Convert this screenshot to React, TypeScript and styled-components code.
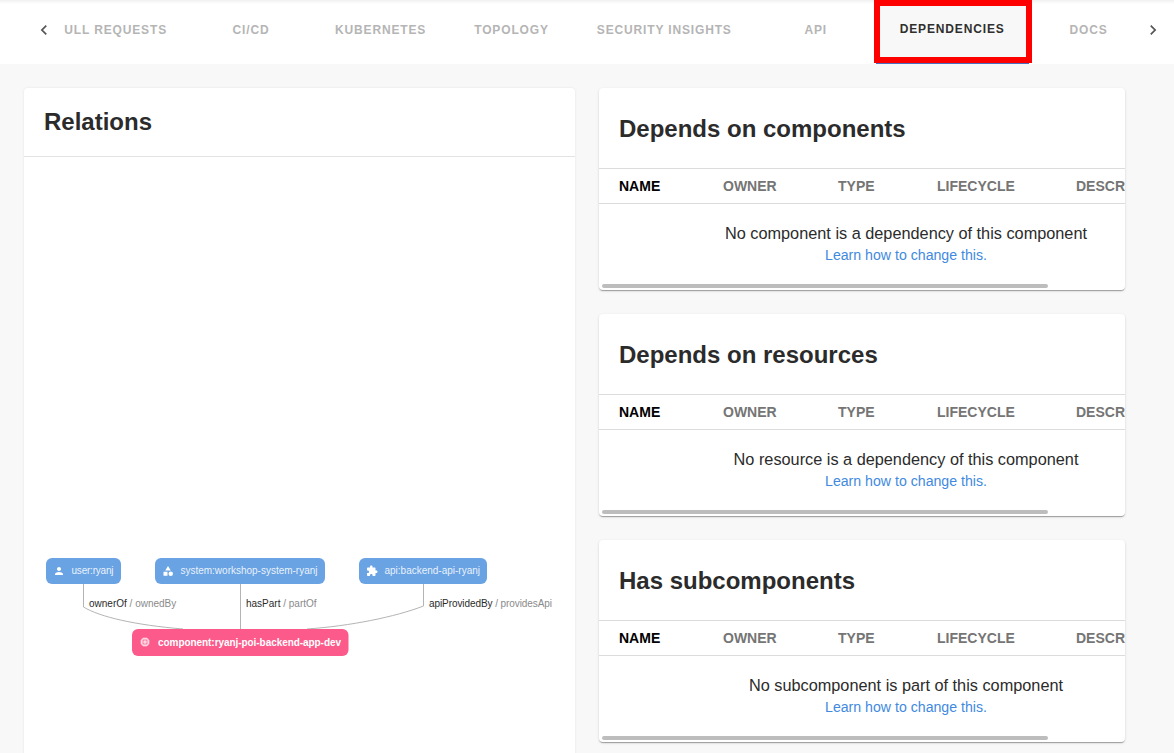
import React from "react";
import styled, { createGlobalStyle } from "styled-components";

const Global = createGlobalStyle`
  html, body { margin: 0; padding: 0; height: 753px; overflow: hidden; background: #f8f8f8; }
  body { font-family: "Liberation Sans", Arial, sans-serif; color: #2b2b2b; }
  * { box-sizing: border-box; }
`;

const Page = styled.div`
  width: 1174px;
  height: 753px;
  overflow: hidden;
  background: #f8f8f8;
`;

const TabBar = styled.nav`
  position: relative;
  display: flex;
  align-items: stretch;
  height: 64px;
  padding-left: 24px;
  background: #fff;
  &::before {
    content: "";
    position: absolute;
    left: 0;
    right: 0;
    top: 0;
    height: 4px;
    background: linear-gradient(rgba(0, 0, 0, 0.06), rgba(0, 0, 0, 0));
    pointer-events: none;
  }
`;

const ScrollButton = styled.button`
  flex: 0 0 40px;
  display: flex;
  align-items: center;
  justify-content: center;
  padding: 0 0 4px;
  border: 0;
  background: transparent;
  color: #555;
`;

const TabScroller = styled.div`
  flex: 0 0 1069px;
  overflow: hidden;
`;

const TabRow = styled.div`
  display: flex;
  height: 64px;
  margin-left: -32.5px;
  width: max-content;
`;

const Tab = styled.div<{ $selected?: boolean }>`
  position: relative;
  flex: none;
  min-width: 120px;
  height: 64px;
  padding: 0 24px 5px;
  display: flex;
  align-items: center;
  justify-content: center;
  font-size: 12px;
  font-weight: 700;
  letter-spacing: 0.85px;
  text-transform: uppercase;
  white-space: nowrap;
  color: ${(p) => (p.$selected ? "#2f2f2f" : "#b5b5b5")};
  background: ${(p) => (p.$selected ? "#f8f8f8" : "transparent")};
  ${(p) => (p.$selected ? "border-bottom: 1px solid #4a6fc0;" : "")}
`;

const RedMark = styled.span`
  position: absolute;
  left: -2px;
  right: -3px;
  top: 0;
  bottom: 0;
  border: 6px solid #ff0000;
  pointer-events: none;
`;

const Content = styled.main`
  display: grid;
  grid-template-columns: 551px 526px;
  column-gap: 24px;
  padding: 24px;
  align-items: start;
`;

const Card = styled.section`
  background: #fff;
  border-radius: 4px;
  box-shadow: 0 2px 1px -1px rgba(0, 0, 0, 0.2), 0 1px 1px 0 rgba(0, 0, 0, 0.14), 0 1px 3px 0 rgba(0, 0, 0, 0.12);
  overflow: hidden;
`;

const RelationsCard = styled(Card)`
  height: 700px;
  box-shadow: 0 0 3px rgba(0, 0, 0, 0.08);
`;

const RelationsHeader = styled.header`
  height: 69px;
  padding: 0 20px 1px;
  display: flex;
  align-items: center;
  border-bottom: 1px solid #e3e3e3;
`;

const CardTitle = styled.h2`
  margin: 0;
  font-size: 24px;
  font-weight: 700;
  line-height: 32px;
  color: #2b2b2b;
`;

const GraphArea = styled.div`
  height: 631px;
`;

const Graph = styled.svg`
  display: block;
  width: 551px;
  height: 631px;
`;

const NodeLabel = styled.text`
  font-family: "Liberation Sans", Arial, sans-serif;
  font-size: 10px;
  fill: #fff;
  fill-opacity: 0.88;
`;

const MainNodeLabel = styled(NodeLabel)`
  font-weight: 700;
  fill-opacity: 1;
`;

const EdgeLabel = styled.text`
  font-family: "Liberation Sans", Arial, sans-serif;
  font-size: 10px;
  fill: #8a8a8a;
`;

const EdgeStrong = styled.tspan`
  fill: #2b2b2b;
`;

const Column = styled.div`
  display: flex;
  flex-direction: column;
  gap: 24px;
`;

const DependencyCard = styled(Card)`
  height: 202px;
  display: flex;
  flex-direction: column;
`;

const DependencyHeader = styled.header`
  height: 81px;
  flex: none;
  padding: 1px 20px 0;
  display: flex;
  align-items: center;
  border-bottom: 1px solid #dcdcdc;
`;

const TableClip = styled.div`
  overflow: hidden;
  flex: 1;
`;

const Table = styled.div`
  width: 614px;
`;

const HeadRow = styled.div`
  display: grid;
  grid-template-columns: 104px 115px 99px 139px 1fr;
  height: 35px;
  align-items: center;
  padding-left: 20px;
  border-bottom: 1px solid #dcdcdc;
`;

const HeadCell = styled.div<{ $active?: boolean }>`
  font-size: 14px;
  font-weight: 700;
  white-space: nowrap;
  color: ${(p) => (p.$active ? "#000" : "#757575")};
`;

const EmptyRow = styled.div`
  padding-top: 18px;
  text-align: center;
`;

const EmptyText = styled.div`
  font-size: 16.3px;
  line-height: 22px;
  color: #2b2b2b;
`;

const HelpLink = styled.a`
  display: block;
  font-size: 14.15px;
  line-height: 22px;
  color: #3f8ae0;
  text-decoration: none;
`;

const ScrollThumb = styled.div`
  flex: none;
  width: 446px;
  height: 4px;
  margin: 0 0 2px 3px;
  border-radius: 2px;
  background: #bdbdbd;
`;

const Chevron = ({ d }: { d: string }) => (
  <svg width="20" height="20" viewBox="0 0 24 24" fill="currentColor">
    <path d={d} />
  </svg>
);

const tabs = ["Pull Requests", "CI/CD", "Kubernetes", "Topology", "Security Insights", "API", "Dependencies", "Docs"];
const columns = ["Name", "Owner", "Type", "Lifecycle", "Description"];
const sections = [
  { title: "Depends on components", empty: "No component is a dependency of this component" },
  { title: "Depends on resources", empty: "No resource is a dependency of this component" },
  { title: "Has subcomponents", empty: "No subcomponent is part of this component" },
];

const ICONS = {
  user: "M12 12c2.21 0 4-1.79 4-4s-1.79-4-4-4-4 1.79-4 4 1.79 4 4 4zm0 2c-2.67 0-8 1.34-8 4v2h16v-2c0-2.66-5.33-4-8-4z",
  system: "M12 2l-5.5 9h11zM17.5 13a4.5 4.5 0 1 0 0 9 4.5 4.5 0 0 0 0-9zM3 13.5h8v8H3z",
  api: "M20.5 11H19V7c0-1.1-.9-2-2-2h-4V3.5C13 2.12 11.88 1 10.5 1S8 2.12 8 3.5V5H4c-1.1 0-1.99.9-1.99 2v3.8H3.5c1.49 0 2.7 1.21 2.7 2.7s-1.21 2.7-2.7 2.7H2V20c0 1.1.9 2 2 2h3.8v-1.5c0-1.49 1.21-2.7 2.7-2.7 1.49 0 2.7 1.21 2.7 2.7V22H17c1.1 0 2-.9 2-2v-4h1.5c1.38 0 2.5-1.12 2.5-2.5S21.88 11 20.5 11z",
  component: "M15 9H9v6h6V9zm-2 4h-2v-2h2v2zm8-2V9h-2V7c0-1.1-.9-2-2-2h-2V3h-2v2h-2V3H9v2H7c-1.1 0-2 .9-2 2v2H3v2h2v2H3v2h2v2c0 1.1.9 2 2 2h2v2h2v-2h2v2h2v-2h2c1.1 0 2-.9 2-2v-2h2v-2h-2v-2h2zm-4 6H7V7h10v10z",
};

const GraphIcon = ({ d, x, y, size = 12 }: { d: string; x: number; y: number; size?: number }) => (
  <svg x={x} y={y} width={size} height={size} viewBox="0 0 24 24">
    <path d={d} fill="#fff" />
  </svg>
);

const RelationsGraph = () => (
  <Graph viewBox="24 157 551 631">
    <g fill="none" stroke="#b4b4b4" strokeWidth="1">
      <path d="M83.500 584 V607 C100 617 135 625 183 629" />
      <path d="M240.500 584 V629" />
      <path d="M423.500 584 V606 C395 617 350 626 307 629" />
    </g>
    <rect x="46" y="558" width="75" height="26" rx="6" fill="#6aa3e3" />
    <GraphIcon d={ICONS.user} x={53} y={565} />
    <NodeLabel x="71.5" y="574" textLength="42">user:ryanj</NodeLabel>
    <rect x="155" y="558" width="170" height="26" rx="6" fill="#6aa3e3" />
    <GraphIcon d={ICONS.system} x={162} y={565} />
    <NodeLabel x="180.5" y="574" textLength="137">system:workshop-system-ryanj</NodeLabel>
    <rect x="359" y="558" width="128" height="26" rx="6" fill="#6aa3e3" />
    <GraphIcon d={ICONS.api} x={366} y={565} />
    <NodeLabel x="384.5" y="574" textLength="95.500">api:backend-api-ryanj</NodeLabel>
    <rect x="132" y="629" width="216.500" height="27" rx="6" fill="#fb5a8b" />
    <GraphIcon d={ICONS.component} x={139} y={636} />
    <MainNodeLabel x="158" y="645.500" textLength="183">component:ryanj-poi-backend-app-dev</MainNodeLabel>
    <EdgeLabel x="89" y="607"><EdgeStrong>ownerOf</EdgeStrong> / ownedBy</EdgeLabel>
    <EdgeLabel x="246" y="607"><EdgeStrong>hasPart</EdgeStrong> / partOf</EdgeLabel>
    <EdgeLabel x="429" y="607" textLength="123"><EdgeStrong>apiProvidedBy</EdgeStrong> / providesApi</EdgeLabel>
  </Graph>
);

export default function App() {
  return (
    <Page>
      <Global />
      <TabBar>
        <ScrollButton aria-label="Scroll left">
          <Chevron d="M15.41 16.59 10.83 12l4.58-4.59L14 6l-6 6 6 6z" />
        </ScrollButton>
        <TabScroller>
          <TabRow>
            {tabs.map((t) => (
              <Tab key={t} $selected={t === "Dependencies"}>
                {t}
                {t === "Dependencies" && <RedMark />}
              </Tab>
            ))}
          </TabRow>
        </TabScroller>
        <ScrollButton aria-label="Scroll right">
          <Chevron d="M8.59 16.59 13.17 12 8.59 7.41 10 6l6 6-6 6z" />
        </ScrollButton>
      </TabBar>
      <Content>
        <RelationsCard>
          <RelationsHeader>
            <CardTitle>Relations</CardTitle>
          </RelationsHeader>
          <GraphArea>
            <RelationsGraph />
          </GraphArea>
        </RelationsCard>
        <Column>
          {sections.map((s) => (
            <DependencyCard key={s.title}>
              <DependencyHeader>
                <CardTitle>{s.title}</CardTitle>
              </DependencyHeader>
              <TableClip>
                <Table>
                  <HeadRow>
                    {columns.map((c, i) => (
                      <HeadCell key={c} $active={i === 0}>
                        {c.toUpperCase()}
                      </HeadCell>
                    ))}
                  </HeadRow>
                  <EmptyRow>
                    <EmptyText>{s.empty}</EmptyText>
                    <HelpLink href="#">Learn how to change this.</HelpLink>
                  </EmptyRow>
                </Table>
              </TableClip>
              <ScrollThumb />
            </DependencyCard>
          ))}
        </Column>
      </Content>
    </Page>
  );
}
